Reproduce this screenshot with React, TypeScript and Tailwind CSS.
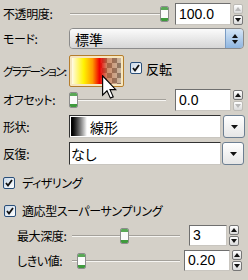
import React from "react";

const jp = "font-['Noto_Sans_CJK_JP','Noto_Sans',sans-serif] [font-feature-settings:'palt']";

const Line = ({ w }: { w: number }) => (
  <div className="flex flex-col" style={{ width: w }}>
    <div className="h-px bg-[#a4a19b]" />
    <div className="h-px bg-[#f6f5f2]" />
  </div>
);

const Thumb = () => (
  <div className="w-[9px] h-[16px] rounded-[2px] border border-[#8c8c8c] bg-[#fbfbfb] flex flex-col justify-between overflow-hidden">
    <div className="h-[3px] bg-[#5aa857]" />
    <div className="h-[3px] bg-[#3f9a3d]" />
  </div>
);

const Slider = ({ ml, before, after }: { ml: number; before: number; after: number }) => (
  <div className="flex items-center" style={{ marginLeft: ml }}>
    {before > 0 && <Line w={before} />}
    <Thumb />
    {after > 0 && <Line w={after} />}
  </div>
);

const Tri = ({ up, off }: { up?: boolean; off?: boolean }) => (
  <svg width="6" height="4" viewBox="0 0 6 4">
    <path d={up ? "M0 4 L3 0 L6 4 Z" : "M0 0 L3 4 L6 0 Z"} fill={off ? "#b8b8b8" : "#111"} />
  </svg>
);

const SpinBtn = ({ up, off }: { up?: boolean; off?: boolean }) => (
  <div
    className={
      "w-[10px] h-[10px] rounded-[2px] border flex items-center justify-center bg-gradient-to-b from-white to-[#d9d9d9] " +
      (off ? "border-[#bdbbb6]" : "border-[#777]")
    }
  >
    <Tri up={up} off={off} />
  </div>
);

const Spinner = ({ upOff, downOff }: { upOff?: boolean; downOff?: boolean }) => (
  <div className="flex flex-col gap-[1px] ml-[2px]">
    <SpinBtn up off={upOff} />
    <SpinBtn off={downOff} />
  </div>
);

const NumBox = ({ value, w }: { value: string; w: number }) => (
  <div
    className="h-full bg-white border border-t-[#6f6f6f] border-l-[#6f6f6f] border-b-[#c9c6c0] border-r-[#c9c6c0] flex items-center pl-[3px] text-[14px] text-black font-['Liberation_Sans',Arial,sans-serif]"
    style={{ width: w }}
  >
    {value}
  </div>
);

const Check = () => (
  <div className="w-[12px] h-[12px] rounded-[2px] border border-[#2a4f7a] bg-gradient-to-br from-[#c9d8e8] to-white flex items-center justify-center">
    <svg width="8" height="8" viewBox="0 0 8 8">
      <path d="M1 4 L3 6.5 L7 1" stroke="#111" strokeWidth="1.8" fill="none" />
    </svg>
  </div>
);

const DropBtn = () => (
  <div className="w-[22px] h-full rounded-[3px] border border-[#6d7f92] bg-gradient-to-b from-white to-[#e6e6e6] flex items-center justify-center">
    <svg width="7" height="4" viewBox="0 0 7 4">
      <path d="M0 0 L3.5 4 L7 0 Z" fill="#111" />
    </svg>
  </div>
);

const Label = ({ children, w = 69, pl = 3 }: { children: React.ReactNode; w?: number; pl?: number }) => (
  <div className="text-[12px] leading-none text-black shrink-0 whitespace-nowrap tracking-[-0.4px]" style={{ width: w, paddingLeft: pl }}>
    {children}
  </div>
);

export default function App() {
  return (
    <div className={"relative w-[248px] h-[280px] overflow-hidden bg-[#d4d0c8] flex flex-col " + jp}>
      {/* opacity */}
      <div className="flex items-center h-[22px] mt-[3px]">
        <Label>不透明度:</Label>
        <Slider ml={1} before={90} after={0} />
        <div className="w-[6px]" />
        <NumBox value="100.0" w={56} />
        <Spinner upOff />
      </div>

      {/* mode */}
      <div className="flex items-center h-[21px] mt-[3px]">
        <Label>モード:</Label>
        <div className="flex h-full w-[175px] rounded-[4px] border border-[#8b8b8b] overflow-hidden">
          <div className="flex-1 flex items-center pl-[5px] text-[14px] leading-none bg-gradient-to-b from-[#fbfbfb] to-[#d6d6d6]">
            標準
          </div>
          <div className="w-[18px] flex flex-col items-center justify-center gap-[2px] border-l border-[#7a9cc4] bg-gradient-to-b from-[#d6e6f6] to-[#8fb6e0]">
            <Tri up />
            <Tri />
          </div>
        </div>
      </div>

      {/* gradient */}
      <div className="flex items-center h-[32px] mt-[6px]">
        <Label>
          <span className="text-[11.5px] tracking-[-1.5px]">グラデーション:</span>
        </Label>
        <div className="w-[55px] h-full rounded-[2px] border border-[#b57d2c] bg-[#f6e6bf] p-[2px]">
          <div className="w-full h-full bg-[conic-gradient(#c9b7a1_25%,#8d7b69_0_50%,#c9b7a1_0_75%,#8d7b69_0)] bg-[length:10px_10px]">
            <div className="w-full h-full bg-[linear-gradient(to_right,#fffbe8_0%,#fff200_24%,#ff9a00_42%,#f00000_56%,rgba(220,60,0,0.35)_72%,rgba(200,120,40,0)_100%)]" />
          </div>
        </div>
        <div className="ml-[6px] flex items-center gap-[4px] -mt-[6px]">
          <Check />
          <span className="text-[13px] leading-none">反転</span>
        </div>
      </div>

      {/* offset */}
      <div className="flex items-center h-[22px] mt-[2px]">
        <Label>オフセット:</Label>
        <Slider ml={0} before={0} after={88} />
        <div className="w-[9px]" />
        <NumBox value="0.0" w={56} />
        <Spinner downOff />
      </div>

      {/* shape */}
      <div className="flex items-center h-[23px] mt-[4px]">
        <Label>形状:</Label>
        <div className="flex items-center w-[152px] h-full bg-white border border-t-[#333] border-l-[#333] border-b-[#c9c6c0] border-r-[#c9c6c0]">
          <div className="ml-[1px] w-[16px] h-[19px] bg-gradient-to-r from-black to-white" />
          <span className="ml-[3px] text-[14px] leading-none">線形</span>
        </div>
        <div className="w-[2px]" />
        <DropBtn />
      </div>

      {/* repeat */}
      <div className="flex items-center h-[23px] mt-[4px]">
        <Label>反復:</Label>
        <div className="flex items-center w-[152px] h-full bg-white border border-t-[#333] border-l-[#333] border-b-[#c9c6c0] border-r-[#c9c6c0] pl-[1px] text-[14px] leading-none">
          なし
        </div>
        <div className="w-[1px]" />
        <DropBtn />
      </div>

      {/* dithering */}
      <div className="flex items-center h-[16px] mt-[10px] pl-[3px] gap-[7px]">
        <Check />
        <span className="text-[12px] leading-none tracking-[-0.4px]">ディザリング</span>
      </div>

      {/* adaptive supersampling */}
      <div className="flex items-center h-[16px] mt-[12px] pl-[4px] gap-[6px]">
        <Check />
        <span className="text-[12px] leading-none tracking-[-0.4px]">適応型スーパーサンプリング</span>
      </div>

      {/* max depth */}
      <div className="flex items-center h-[21px] mt-[6px]">
        <Label w={72} pl={17}>最大深度:</Label>
        <Slider ml={0} before={48} after={51} />
        <div className="w-[9px]" />
        <NumBox value="3" w={38} />
        <Spinner />
      </div>

      {/* threshold */}
      <div className="flex items-center h-[21px] mt-[4px]">
        <Label w={72} pl={17}>しきい値:</Label>
        <Slider ml={0} before={5} after={94} />
        <div className="w-[4px]" />
        <NumBox value="0.20" w={46} />
        <Spinner />
      </div>

      {/* mouse pointer over the gradient swatch */}
      <svg className="absolute left-[102px] top-[75px]" width="15" height="24" viewBox="0 0 12 19">
        <path d="M0.5 0.5 L0.5 16 L4 12.5 L6.7 18.4 L9 17.4 L6.4 11.6 L11 11.6 Z" fill="#fff" stroke="#000" strokeWidth="0.9" />
      </svg>
    </div>
  );
}
